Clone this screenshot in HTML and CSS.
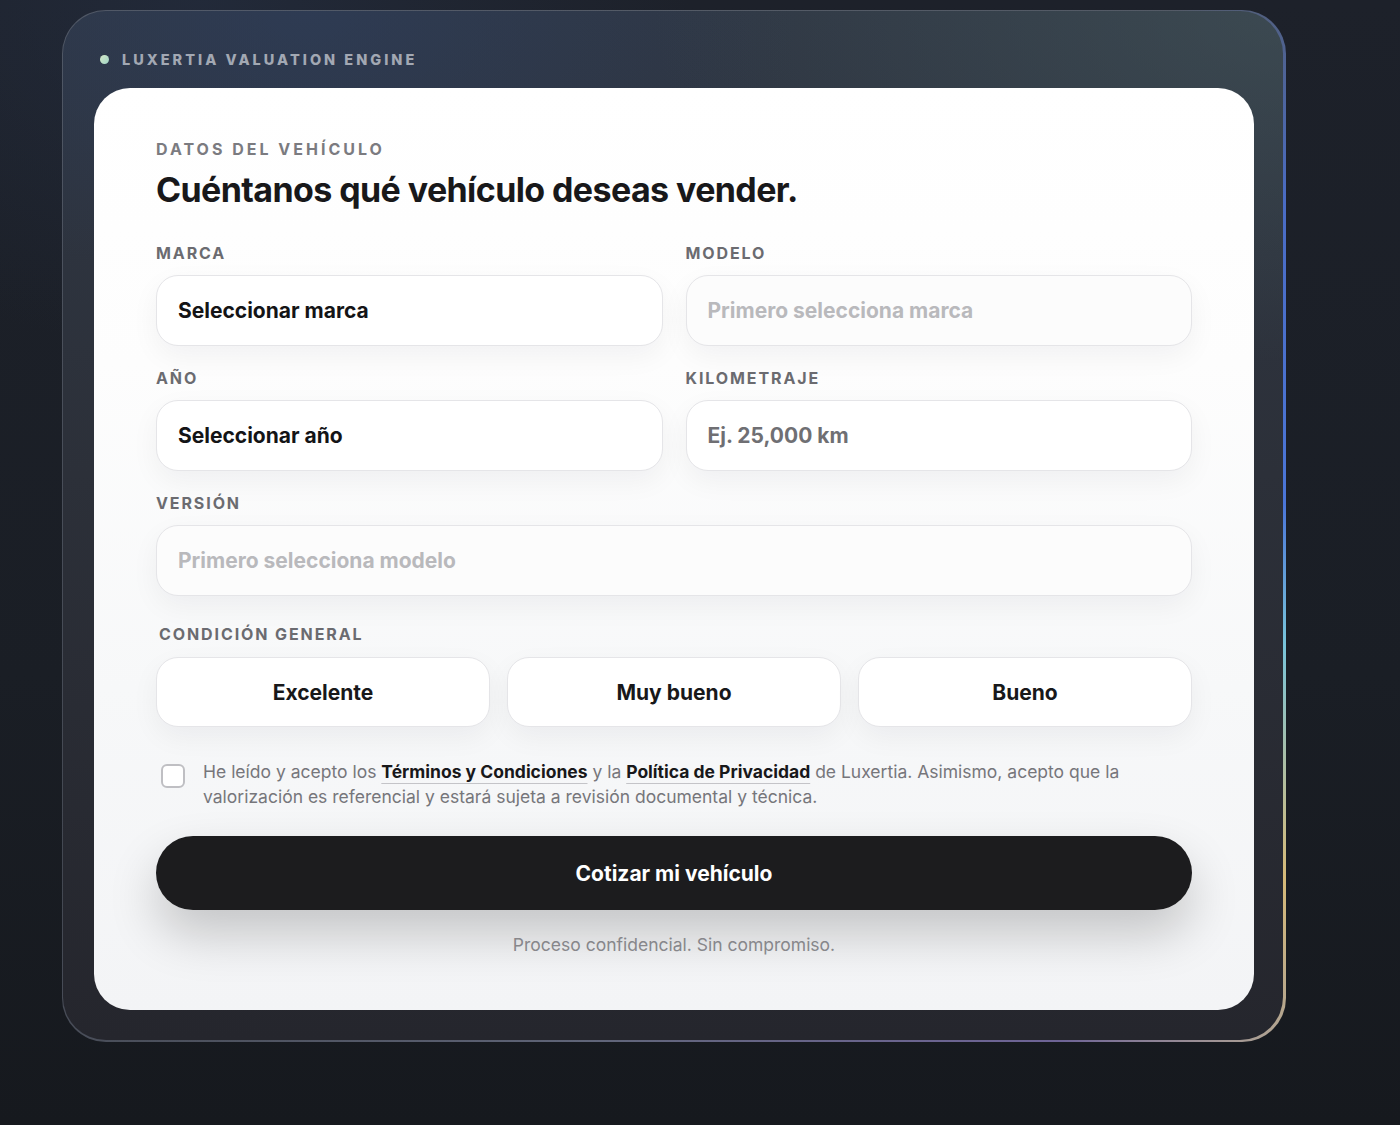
FILE: index.html
```html
<!DOCTYPE html>
<html lang="es">
<head>
<meta charset="utf-8">
<title>Luxertia Valuation Engine</title>
<link rel="stylesheet" href="styles.css">
</head>
<body>
<main class="page">
  <div class="frame">
  <section class="panel">
    <header class="panel-head">
      <span class="dot"></span>
      <span class="brand">LUXERTIA VALUATION ENGINE</span>
    </header>
    <div class="card">
      <p class="eyebrow">DATOS DEL VEHÍCULO</p>
      <h1 class="title">Cuéntanos qué vehículo deseas vender.</h1>

      <div class="grid">
        <div class="group">
          <label class="label">MARCA</label>
          <div class="field"><span class="value">Seleccionar marca</span></div>
        </div>
        <div class="group">
          <label class="label">MODELO</label>
          <div class="field is-disabled"><span class="placeholder">Primero selecciona marca</span></div>
        </div>
        <div class="group">
          <label class="label">AÑO</label>
          <div class="field"><span class="value">Seleccionar año</span></div>
        </div>
        <div class="group">
          <label class="label">KILOMETRAJE</label>
          <div class="field"><span class="hint">Ej. 25,000 km</span></div>
        </div>
        <div class="group span-2">
          <label class="label">VERSIÓN</label>
          <div class="field is-disabled"><span class="placeholder">Primero selecciona modelo</span></div>
        </div>
      </div>

      <div class="condition">
        <label class="label label-cond">CONDICIÓN GENERAL</label>
        <div class="options">
          <button class="option" type="button">Excelente</button>
          <button class="option" type="button">Muy bueno</button>
          <button class="option" type="button">Bueno</button>
        </div>
      </div>

      <div class="terms">
        <span class="checkbox"></span>
        <p class="terms-text">He leído y acepto los <a class="link" href="#">Términos y Condiciones</a> y la <a class="link" href="#">Política de Privacidad</a> de Luxertia. Asimismo, acepto que la valorización es referencial y estará sujeta a revisión documental y técnica.</p>
      </div>

      <button class="submit" type="button">Cotizar mi vehículo</button>
      <p class="footnote">Proceso confidencial. Sin compromiso.</p>
    </div>
  </section>
  </div>
</main>
</body>
</html>
```

FILE: styles.css
```css
* { box-sizing: border-box; }

html, body {
  margin: 0;
  padding: 0;
}

body {
  min-height: 1125px;
  font-family: "Inter", "Liberation Sans", sans-serif;
  background:
    radial-gradient(ellipse 700px 500px at 200px 0px, rgba(40, 52, 75, 0.45), transparent 70%),
    linear-gradient(180deg, #1d212a 0%, #1a1e25 60%, #16191e 100%);
  color: #1a1a1a;
}

.page {
  padding: 10px 0 0 62px;
}

.frame {
  width: 1224px;
  height: 1032px;
  border-radius: 44px;
  padding: 1px 3px 2.5px 1px;
  background: conic-gradient(from 0deg at 50% 50%,
      rgba(150, 160, 175, 0.45) 0deg,
      rgba(150, 160, 175, 0.45) 44deg,
      #4a6cc4 62deg,
      #4b76d8 88deg,
      #78c4da 101deg,
      #d6ba78 120deg,
      #aca094 131deg,
      #6e6496 143deg,
      rgba(120, 126, 150, 0.75) 190deg,
      rgba(120, 126, 140, 0.45) 240deg,
      rgba(150, 160, 175, 0.45) 360deg);
}

.panel {
  height: 100%;
  border-radius: 43px;
  padding: 0 29px 29.5px 31px;
  background:
    radial-gradient(ellipse 900px 500px at 100% 0%, rgba(70, 88, 92, 0.55), transparent 70%),
    radial-gradient(ellipse 700px 400px at 20% 0%, rgba(45, 62, 95, 0.55), transparent 70%),
    linear-gradient(180deg, #2f3744 0%, #2c3039 45%, #25262d 100%);
  display: flex;
  flex-direction: column;
}

.panel-head {
  height: 20px;
  margin: 38px 0 19px;
  display: flex;
  align-items: center;
  padding-left: 6px;
  gap: 13px;
}

.dot {
  width: 9px;
  height: 9px;
  border-radius: 50%;
  background: linear-gradient(135deg, #d6e8c8, #9fd4c4);
}

.brand {
  font-size: 14.5px;
  font-weight: 800;
  letter-spacing: 3px;
  color: #a2a8b3;
}

.card {
  flex: 1;
  border-radius: 36px;
  background: linear-gradient(180deg, #ffffff 0%, #fdfdfd 30%, #f7f8f9 65%, #f3f4f6 100%);
  padding: 52px 62px 0;
}

.eyebrow {
  margin: 0;
  font-size: 16px;
  line-height: 18px;
  font-weight: 700;
  letter-spacing: 3px;
  color: #7b7b80;
}

.title {
  margin: 12px 0 0;
  font-size: 34px;
  line-height: 40px;
  font-weight: 700;
  letter-spacing: -0.6px;
  color: #18181a;
}

.grid {
  margin-top: 34px;
  display: grid;
  grid-template-columns: 1fr 1fr;
  column-gap: 23px;
  row-gap: 23px;
}

.span-2 { grid-column: span 2; }

.group {
  display: flex;
  flex-direction: column;
  gap: 13px;
}

.label {
  display: block;
  font-size: 16px;
  line-height: 18px;
  font-weight: 700;
  letter-spacing: 1.9px;
  color: #6b6b70;
}

.field {
  height: 71px;
  border-radius: 22px;
  border: 1px solid #e5e5e8;
  background: #ffffff;
  box-shadow: 0 10px 28px rgba(20, 20, 30, 0.05);
  display: flex;
  align-items: center;
  padding: 0 21px;
  font-size: 21px;
  font-weight: 700;
  letter-spacing: 0;
}

.field.is-disabled { background: #fcfcfc; }

.value { color: #141416; }
.placeholder { color: #b9b9bc; }
.hint { color: #6f6f73; }

.condition {
  margin-top: 29px;
  display: flex;
  flex-direction: column;
  gap: 14px;
}

.label-cond { padding-left: 3px; }

.options {
  display: grid;
  grid-template-columns: repeat(3, 1fr);
  gap: 17px;
}

.option {
  height: 70px;
  border-radius: 22px;
  border: 1px solid #e5e5e8;
  background: #ffffff;
  box-shadow: 0 10px 28px rgba(20, 20, 30, 0.05);
  font-family: "Inter", "Liberation Sans", sans-serif;
  font-size: 21px;
  font-weight: 700;
  letter-spacing: 0;
  color: #18181a;
  cursor: pointer;
}

.terms {
  margin-top: 32px;
  display: flex;
  align-items: flex-start;
  gap: 18px;
  padding-left: 5px;
}

.checkbox {
  flex: none;
  width: 24px;
  height: 24px;
  margin-top: 5px;
  border-radius: 6px;
  border: 2px solid #bfbfc3;
  background: #ffffff;
}

.terms-text {
  margin: 0;
  font-size: 17.5px;
  line-height: 25px;
  color: #76767b;
}

.link {
  color: #18181a;
  font-weight: 700;
  text-decoration: underline;
  text-decoration-color: #c4c4c8;
  text-decoration-thickness: 1px;
  text-underline-offset: 5px;
}

.submit {
  display: block;
  width: 100%;
  margin-top: 27px;
  height: 74px;
  border: none;
  border-radius: 999px;
  background: #1c1c1e;
  color: #ffffff;
  font-family: "Inter", "Liberation Sans", sans-serif;
  font-size: 21px;
  font-weight: 700;
  letter-spacing: 0;
  box-shadow: 0 24px 50px rgba(0, 0, 0, 0.2);
  cursor: pointer;
}

.footnote {
  margin: 24px 0 0;
  text-align: center;
  font-size: 17.5px;
  line-height: 22px;
  color: #87878b;
}
```
